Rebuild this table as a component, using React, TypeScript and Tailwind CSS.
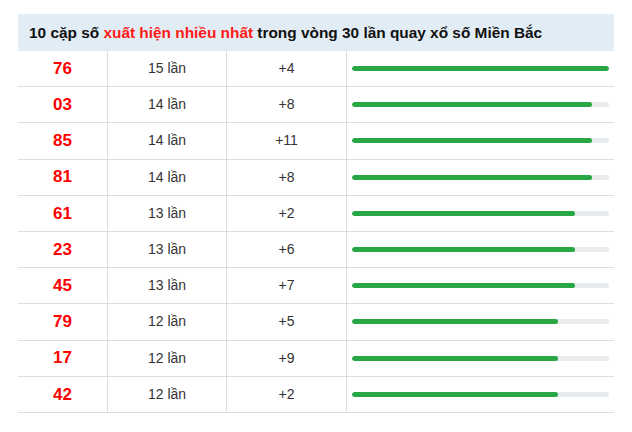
const rows = [
  { num: '76', count: 15, diff: '+4' },
  { num: '03', count: 14, diff: '+8' },
  { num: '85', count: 14, diff: '+11' },
  { num: '81', count: 14, diff: '+8' },
  { num: '61', count: 13, diff: '+2' },
  { num: '23', count: 13, diff: '+6' },
  { num: '45', count: 13, diff: '+7' },
  { num: '79', count: 12, diff: '+5' },
  { num: '17', count: 12, diff: '+9' },
  { num: '42', count: 12, diff: '+2' },
];

const max = 15;

export default function App() {
  return (
    <div className="w-[632px] h-[432px] bg-white pt-[14px] pl-[18px] font-['Liberation_Sans',Arial,sans-serif]">
      <div className="w-[596px]">
        {/* Header */}
        <div className="h-[37px] bg-[#e2ecf4] flex items-center pl-[11px] pt-[1px] text-[15.4px] font-bold text-[#111]">
          10 cặp số&nbsp;<span className="text-[#ff1a1a]">xuất hiện nhiều nhất</span>&nbsp;trong vòng 30 lần quay xổ số Miền Bắc
        </div>

        {rows.map((r) => (
          <div key={r.num} className="flex h-[36.2px] border-b border-[#dddddd] text-[14px] text-[#333]">
            <div className="w-[89px] flex items-center justify-center text-[17px] font-bold text-[#ff0000]">
              {r.num}
            </div>
            <div className="w-[119px] border-l border-[#dddddd] flex items-center justify-center">
              {r.count} lần
            </div>
            <div className="w-[120px] border-l border-[#dddddd] flex items-center justify-center">
              {r.diff}
            </div>
            <div className="flex-1 border-l border-[#dddddd] flex items-center px-[5px]">
              <div className="w-full h-[5px] rounded-full bg-[#e9ecef] overflow-hidden">
                <div
                  className="h-full rounded-full bg-[#28a745]"
                  style={{ width: `${(r.count / max) * 100}%` }}
                />
              </div>
            </div>
          </div>
        ))}
      </div>
    </div>
  );
}
